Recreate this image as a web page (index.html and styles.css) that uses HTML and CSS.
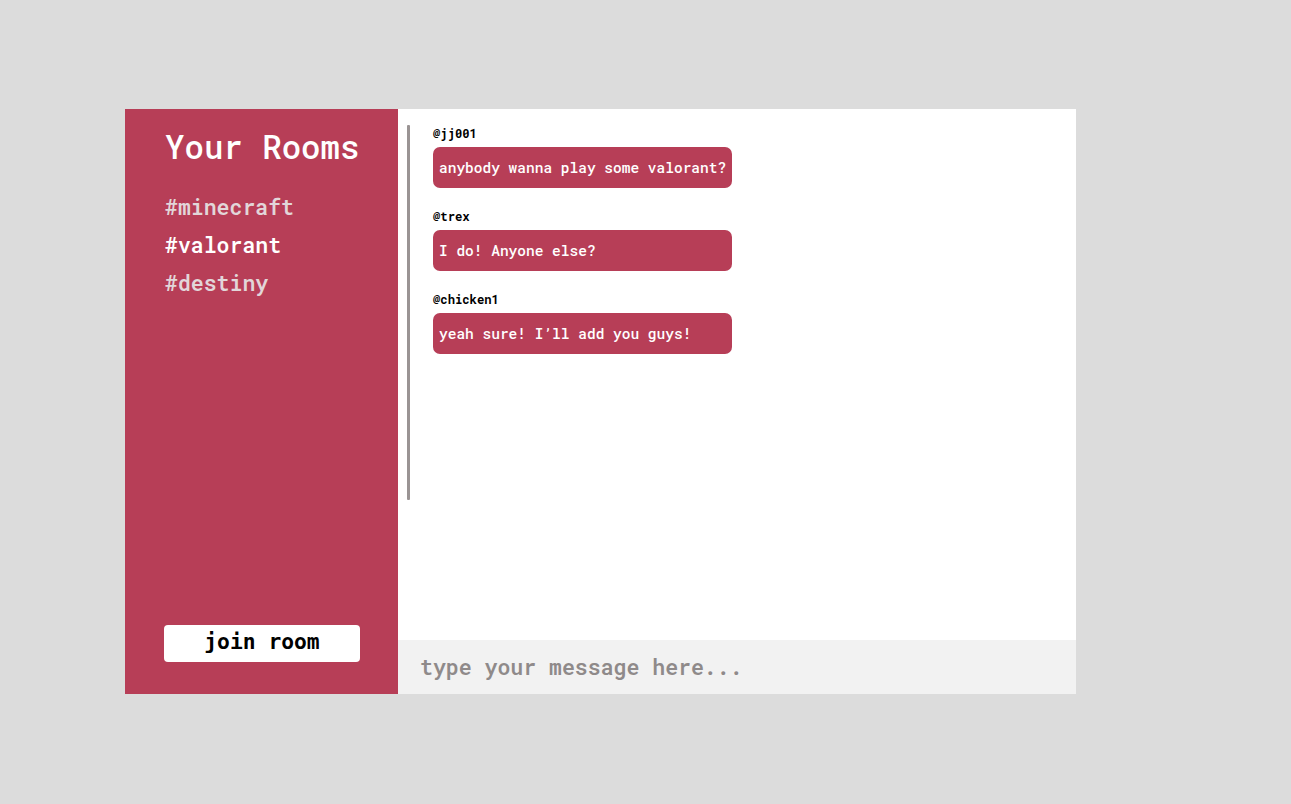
FILE: index.html
```html
<!DOCTYPE html>
<html>
<head>
<meta charset="utf-8">
<link rel="stylesheet" href="styles.css">
</head>
<body>
<div class="app">
  <aside class="sidebar">
    <h1 class="title">Your Rooms</h1>
    <ul class="rooms">
      <li class="room">#minecraft</li>
      <li class="room active">#valorant</li>
      <li class="room">#destiny</li>
    </ul>
    <button class="join">join room</button>
  </aside>
  <main class="chat">
    <div class="messages">
      <div class="track"></div>
      <div class="list">
        <div class="msg">
          <div class="user">@jj001</div>
          <div class="bubble">anybody wanna play some valorant?</div>
        </div>
        <div class="msg">
          <div class="user">@trex</div>
          <div class="bubble">I do! Anyone else?</div>
        </div>
        <div class="msg">
          <div class="user">@chicken1</div>
          <div class="bubble">yeah sure! I’ll add you guys!</div>
        </div>
      </div>
    </div>
    <div class="composer">
      <input class="input" type="text" placeholder="type your message here...">
    </div>
  </main>
</div>
</body>
</html>
```
FILE: styles.css
```css
* { box-sizing: border-box; }
body {
  margin: 0;
  background: #dcdcdc;
  font-family: "Roboto Mono", "DejaVu Sans Mono", monospace;
}
.app {
  display: flex;
  width: 951px;
  height: 585px;
  margin: 109px 0 0 125px;
}
.sidebar {
  width: 273px;
  background: #b73e57;
  display: flex;
  flex-direction: column;
  padding: 18px 0 32px 40px;
}
.title {
  margin: 0;
  font-size: 32.4px;
  line-height: 40px;
  font-weight: 500;
  color: #fff;
}
.rooms {
  list-style: none;
  margin: 21px 0 0;
  padding: 0;
}
.room {
  font-size: 21.5px;
  line-height: 38px;
  font-weight: 600;
  color: #e2d6d9;
}
.room.active { color: #fff; }
.join {
  margin-top: auto;
  margin-left: -1px;
  width: 196px;
  height: 37px;
  border: none;
  border-radius: 4px;
  background: #fff;
  color: #000;
  font-family: "DejaVu Sans Mono", monospace;
  font-weight: bold;
  font-size: 21.3px;
  padding: 0 0 4px;
}
.chat {
  flex: 1;
  display: flex;
  flex-direction: column;
  background: #fff;
}
.messages {
  flex: 1;
  display: flex;
  align-items: flex-start;
  padding: 16px 0 0 9px;
}
.track {
  width: 3px;
  height: 375px;
  background: #9a9494;
  border-radius: 1px;
}
.list {
  margin-left: 23px;
  display: flex;
  flex-direction: column;
  gap: 20px;
}
.user {
  font-size: 12.2px;
  line-height: 16px;
  font-weight: bold;
  color: #000;
}
.bubble {
  margin-top: 6px;
  width: 299px;
  height: 41px;
  background: #b73e57;
  color: #fff;
  border-radius: 7px;
  padding: 0 6px;
  font-size: 14.5px;
  font-weight: 500;
  line-height: 41px;
  white-space: nowrap;
}
.composer {
  height: 54px;
  background: #f2f2f2;
}
.input {
  width: 100%;
  height: 100%;
  border: none;
  background: transparent;
  padding: 0 0 2px 22px;
  font-family: "Roboto Mono", "DejaVu Sans Mono", monospace;
  font-size: 21.5px;
  font-weight: 600;
  outline: none;
}
.input::placeholder { color: #8f8a8a; }
```
